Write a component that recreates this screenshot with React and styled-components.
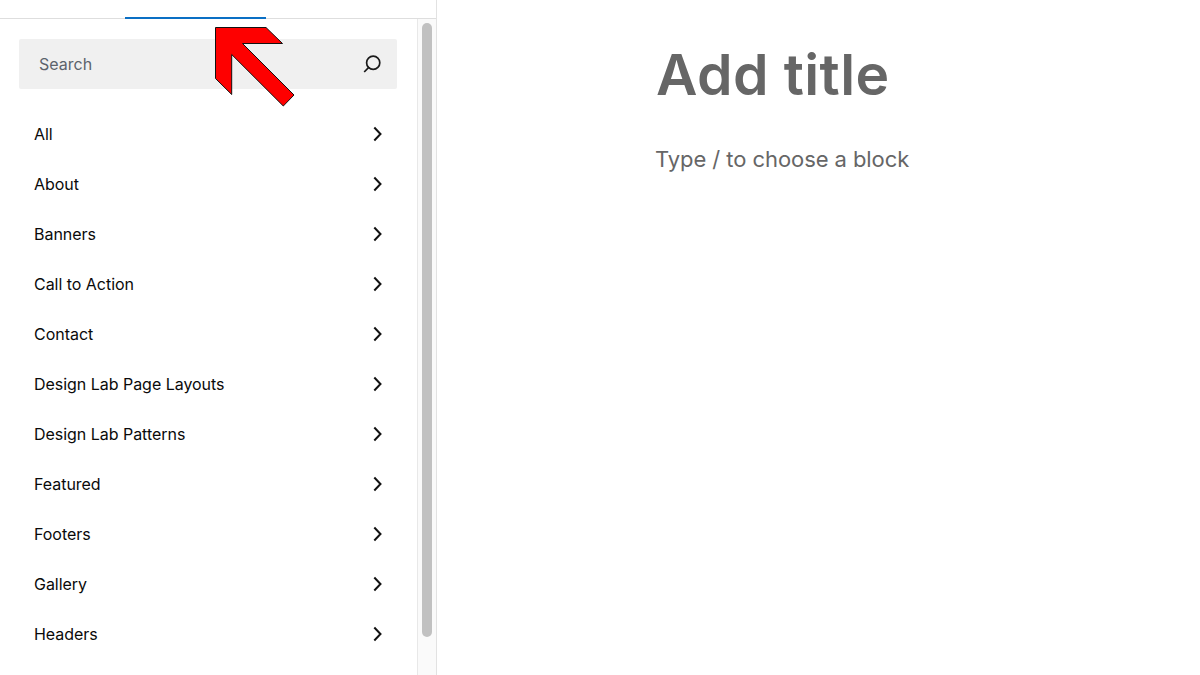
import React from "react";
import styled, { createGlobalStyle } from "styled-components";

const Global = createGlobalStyle`
  html, body { margin: 0; padding: 0; height: 675px; overflow: hidden; background: #fff; }
  #root { height: 675px; }
  * { box-sizing: border-box; }
`;

const Page = styled.div`
  position: relative;
  display: flex;
  width: 1200px;
  height: 675px;
  overflow: hidden;
  background: #fff;
  font-family: Inter, "Liberation Sans", sans-serif;
`;

const Sidebar = styled.aside`
  display: flex;
  flex-direction: column;
  flex: 0 0 437px;
  height: 675px;
  border-right: 1px solid #e2e2e2;
`;

const TabBar = styled.div`
  flex: 0 0 19px;
  min-height: 0;
  padding-left: 125px;
  border-bottom: 1px solid #dedede;
`;

const ActiveTab = styled.div`
  width: 141px;
  height: 19px;
  border-bottom: 2px solid #0a6fc4;
`;

const SidebarBody = styled.div`
  display: flex;
  flex: 1;
  min-height: 0;
`;

const Content = styled.div`
  flex: 1;
  min-width: 0;
  overflow: hidden;
  padding: 20px 20px 0 19px;
`;

const SearchBox = styled.div`
  display: flex;
  align-items: center;
  justify-content: space-between;
  height: 50px;
  padding: 0 13px 0 20px;
  margin-bottom: 20px;
  background: #f0f0f0;
  border-radius: 2px;
  color: #5c636c;
  font-size: 16px;
`;

const Row = styled.div`
  display: flex;
  align-items: center;
  justify-content: space-between;
  height: 50px;
  padding: 0 8px 0 15px;
  color: #0a0a0a;
  font-size: 16px;
  letter-spacing: -0.03px;
`;

const Track = styled.div`
  flex: 0 0 18px;
  padding: 4px 4px 0;
  border-left: 1px solid #e8e8e8;
  background: #fafafa;
`;

const Thumb = styled.div`
  width: 10px;
  height: 614px;
  border-radius: 5px;
  background: #c1c1c1;
`;

const Editor = styled.main`
  flex: 1;
  min-width: 0;
  padding: 37px 0 0 219px;
  color: #666;
`;

const Title = styled.h1`
  margin: 0;
  font-size: 57px;
  line-height: 76px;
  font-weight: 600;
  letter-spacing: 0.4px;
`;

const Placeholder = styled.p`
  margin: 21px 0 0 -1px;
  font-size: 22px;
  line-height: 50px;
  font-weight: 400;
  letter-spacing: -0.07px;
`;

const ArrowSvg = styled.svg`
  position: absolute;
  left: 0;
  top: 0;
  pointer-events: none;
`;

const rows = [
  "All", "About", "Banners", "Call to Action", "Contact", "Design Lab Page Layouts",
  "Design Lab Patterns", "Featured", "Footers", "Gallery", "Headers",
];

const Chevron = () => (
  <svg width="24" height="24" viewBox="0 0 24 24" fill="none" stroke="#111" strokeWidth="2">
    <path d="M9.3 5.5 15.5 12l-6.2 6.5" />
  </svg>
);

const SearchIcon = () => (
  <svg width="24" height="24" viewBox="0 0 24 24" fill="none" stroke="#1a1a1a" strokeWidth="1.7">
    <circle cx="13.2" cy="10.8" r="6.6" />
    <path d="M9 15.2 4.2 20" />
  </svg>
);

export default function App() {
  return (
    <Page>
      <Global />
      <Sidebar>
        <TabBar>
          <ActiveTab />
        </TabBar>
        <SidebarBody>
          <Content>
            <SearchBox>
              <span>Search</span>
              <SearchIcon />
            </SearchBox>
            {rows.map((r) => (
              <Row key={r}>
                <span>{r}</span>
                <Chevron />
              </Row>
            ))}
          </Content>
          <Track>
            <Thumb />
          </Track>
        </SidebarBody>
      </Sidebar>
      <Editor>
        <Title>Add title</Title>
        <Placeholder>Type / to choose a block</Placeholder>
      </Editor>
      <ArrowSvg width="320" height="120" viewBox="0 0 320 120">
        <polygon
          points="215.5,27.5 266,27.5 282.5,43.5 242.5,43.5 294,95 283.3,106 231.7,54.5 231.7,94.5 215.5,78.5"
          fill="#fe0000"
          stroke="#111"
          strokeWidth="1"
        />
      </ArrowSvg>
    </Page>
  );
}
